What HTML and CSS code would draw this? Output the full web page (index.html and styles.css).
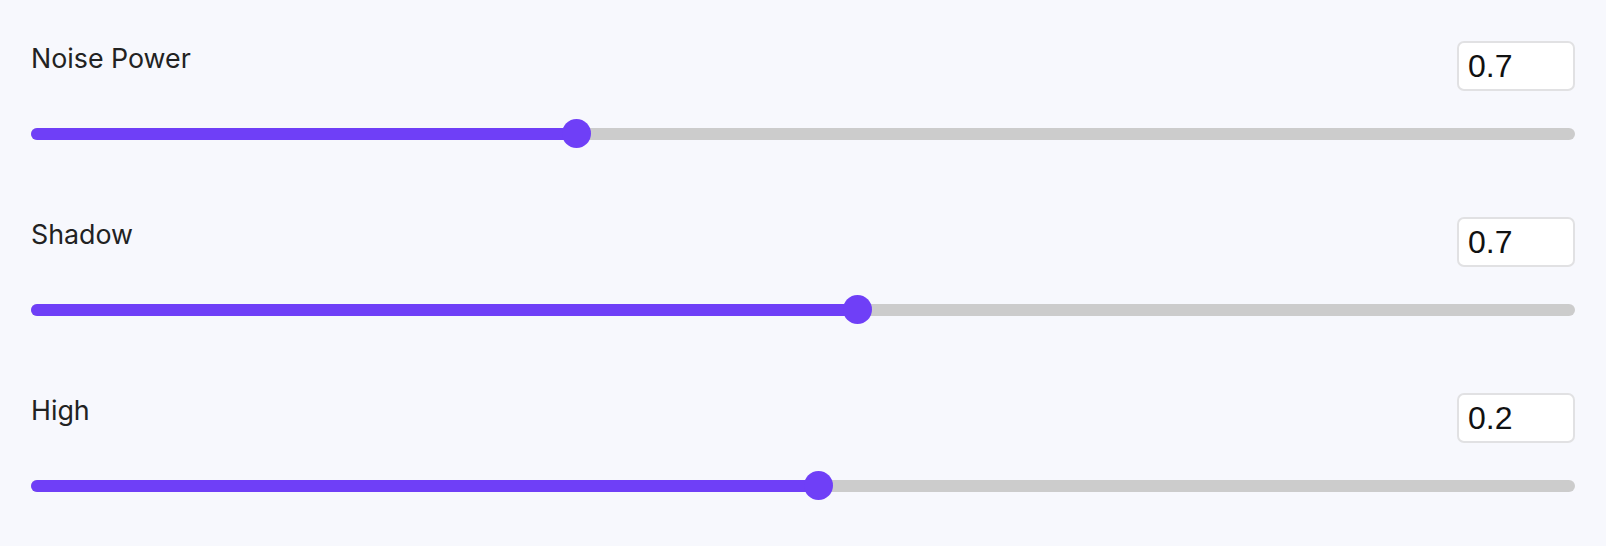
FILE: index.html
```html
<!DOCTYPE html>
<html lang="en">
<head>
<meta charset="utf-8">
<title>Sliders</title>
<link rel="stylesheet" href="styles.css">
</head>
<body>
<main class="panel">
  <section class="control">
    <div class="control-head">
      <label class="control-label">Noise Power</label>
      <input class="control-value" type="text" value="0.7">
    </div>
    <div class="slider">
      <div class="slider-track">
        <div class="slider-fill" style="width:35.3%"></div>
        <div class="slider-thumb" style="left:35.3%"></div>
      </div>
    </div>
  </section>
  <section class="control">
    <div class="control-head">
      <label class="control-label">Shadow</label>
      <input class="control-value" type="text" value="0.7">
    </div>
    <div class="slider">
      <div class="slider-track">
        <div class="slider-fill" style="width:53.5%"></div>
        <div class="slider-thumb" style="left:53.5%"></div>
      </div>
    </div>
  </section>
  <section class="control">
    <div class="control-head">
      <label class="control-label">High</label>
      <input class="control-value" type="text" value="0.2">
    </div>
    <div class="slider">
      <div class="slider-track">
        <div class="slider-fill" style="width:51%"></div>
        <div class="slider-thumb" style="left:51%"></div>
      </div>
    </div>
  </section>
</main>
</body>
</html>
```
FILE: styles.css
```css
html, body {
  margin: 0;
  padding: 0;
  background: #f7f8fd;
}
body {
  font-family: Inter, "Noto Sans", sans-serif;
}
.panel {
  padding: 41px 31px 0;
  display: flex;
  flex-direction: column;
}
.control {
  height: 176px;
}
.control-head {
  display: flex;
  justify-content: space-between;
  align-items: flex-start;
  height: 50px;
}
.control-label {
  margin-top: 1px;
  font-size: 26.8px;
  line-height: 1.21;
  color: #222222;
}
.control-value {
  box-sizing: border-box;
  width: 118px;
  height: 50px;
  margin: 0;
  padding: 0 9px;
  border: 2px solid #e1e1e3;
  border-radius: 7px;
  background: #ffffff;
  font-family: "Liberation Sans", Arial, sans-serif;
  font-size: 32px;
  color: #111111;
  outline: none;
}
.slider {
  margin-top: 28px;
  height: 29px;
  display: flex;
  align-items: center;
}
.slider-track {
  position: relative;
  width: 100%;
  height: 12px;
  border-radius: 6px;
  background: #cccccc;
}
.slider-fill {
  height: 100%;
  border-radius: 6px 0 0 6px;
  background: #6f3ff7;
}
.slider-thumb {
  position: absolute;
  top: 50%;
  width: 29px;
  height: 29px;
  margin: -14.5px 0 0 -14.5px;
  border-radius: 50%;
  background: #6f3ff7;
}
```
